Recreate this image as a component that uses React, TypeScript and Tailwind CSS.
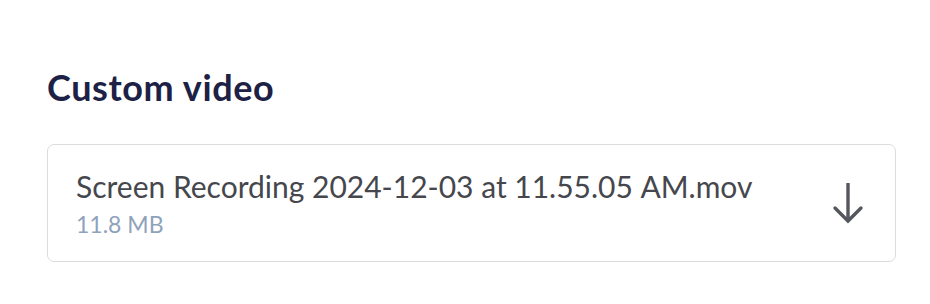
export default function App() {
  return (
    <div className="w-[930px] h-[304px] bg-white px-[47px] pt-[69px]" style={{ fontFamily: 'Lato, "Open Sans", sans-serif' }}>
      <h2 className="text-[36px] leading-[36px] font-bold tracking-[0.6px] text-[#1d2145]">Custom video</h2>
      <div className="mt-[39px] h-[118px] w-[849px] rounded-[7px] border border-[#dcdcdc] flex items-center justify-between pl-[28px] pr-[31px]">
        <div className="flex flex-col">
          <span className="text-[30px] leading-[36px] text-[#45474d]">Screen Recording 2024-12-03 at 11.55.05{'\u202F'}AM.mov</span>
          <span className="mt-[6px] text-[23px] leading-[28px] text-[#8fa2bb]">11.8 MB</span>
        </div>
        <svg width="32" height="44" viewBox="0 0 32 44" fill="none" stroke="#55575e" strokeWidth="3.4" strokeLinejoin="miter">
          <path d="M16 2 V40" />
          <path d="M3 27 L16 40 L29 27" strokeLinecap="round" />
        </svg>
      </div>
    </div>
  );
}
